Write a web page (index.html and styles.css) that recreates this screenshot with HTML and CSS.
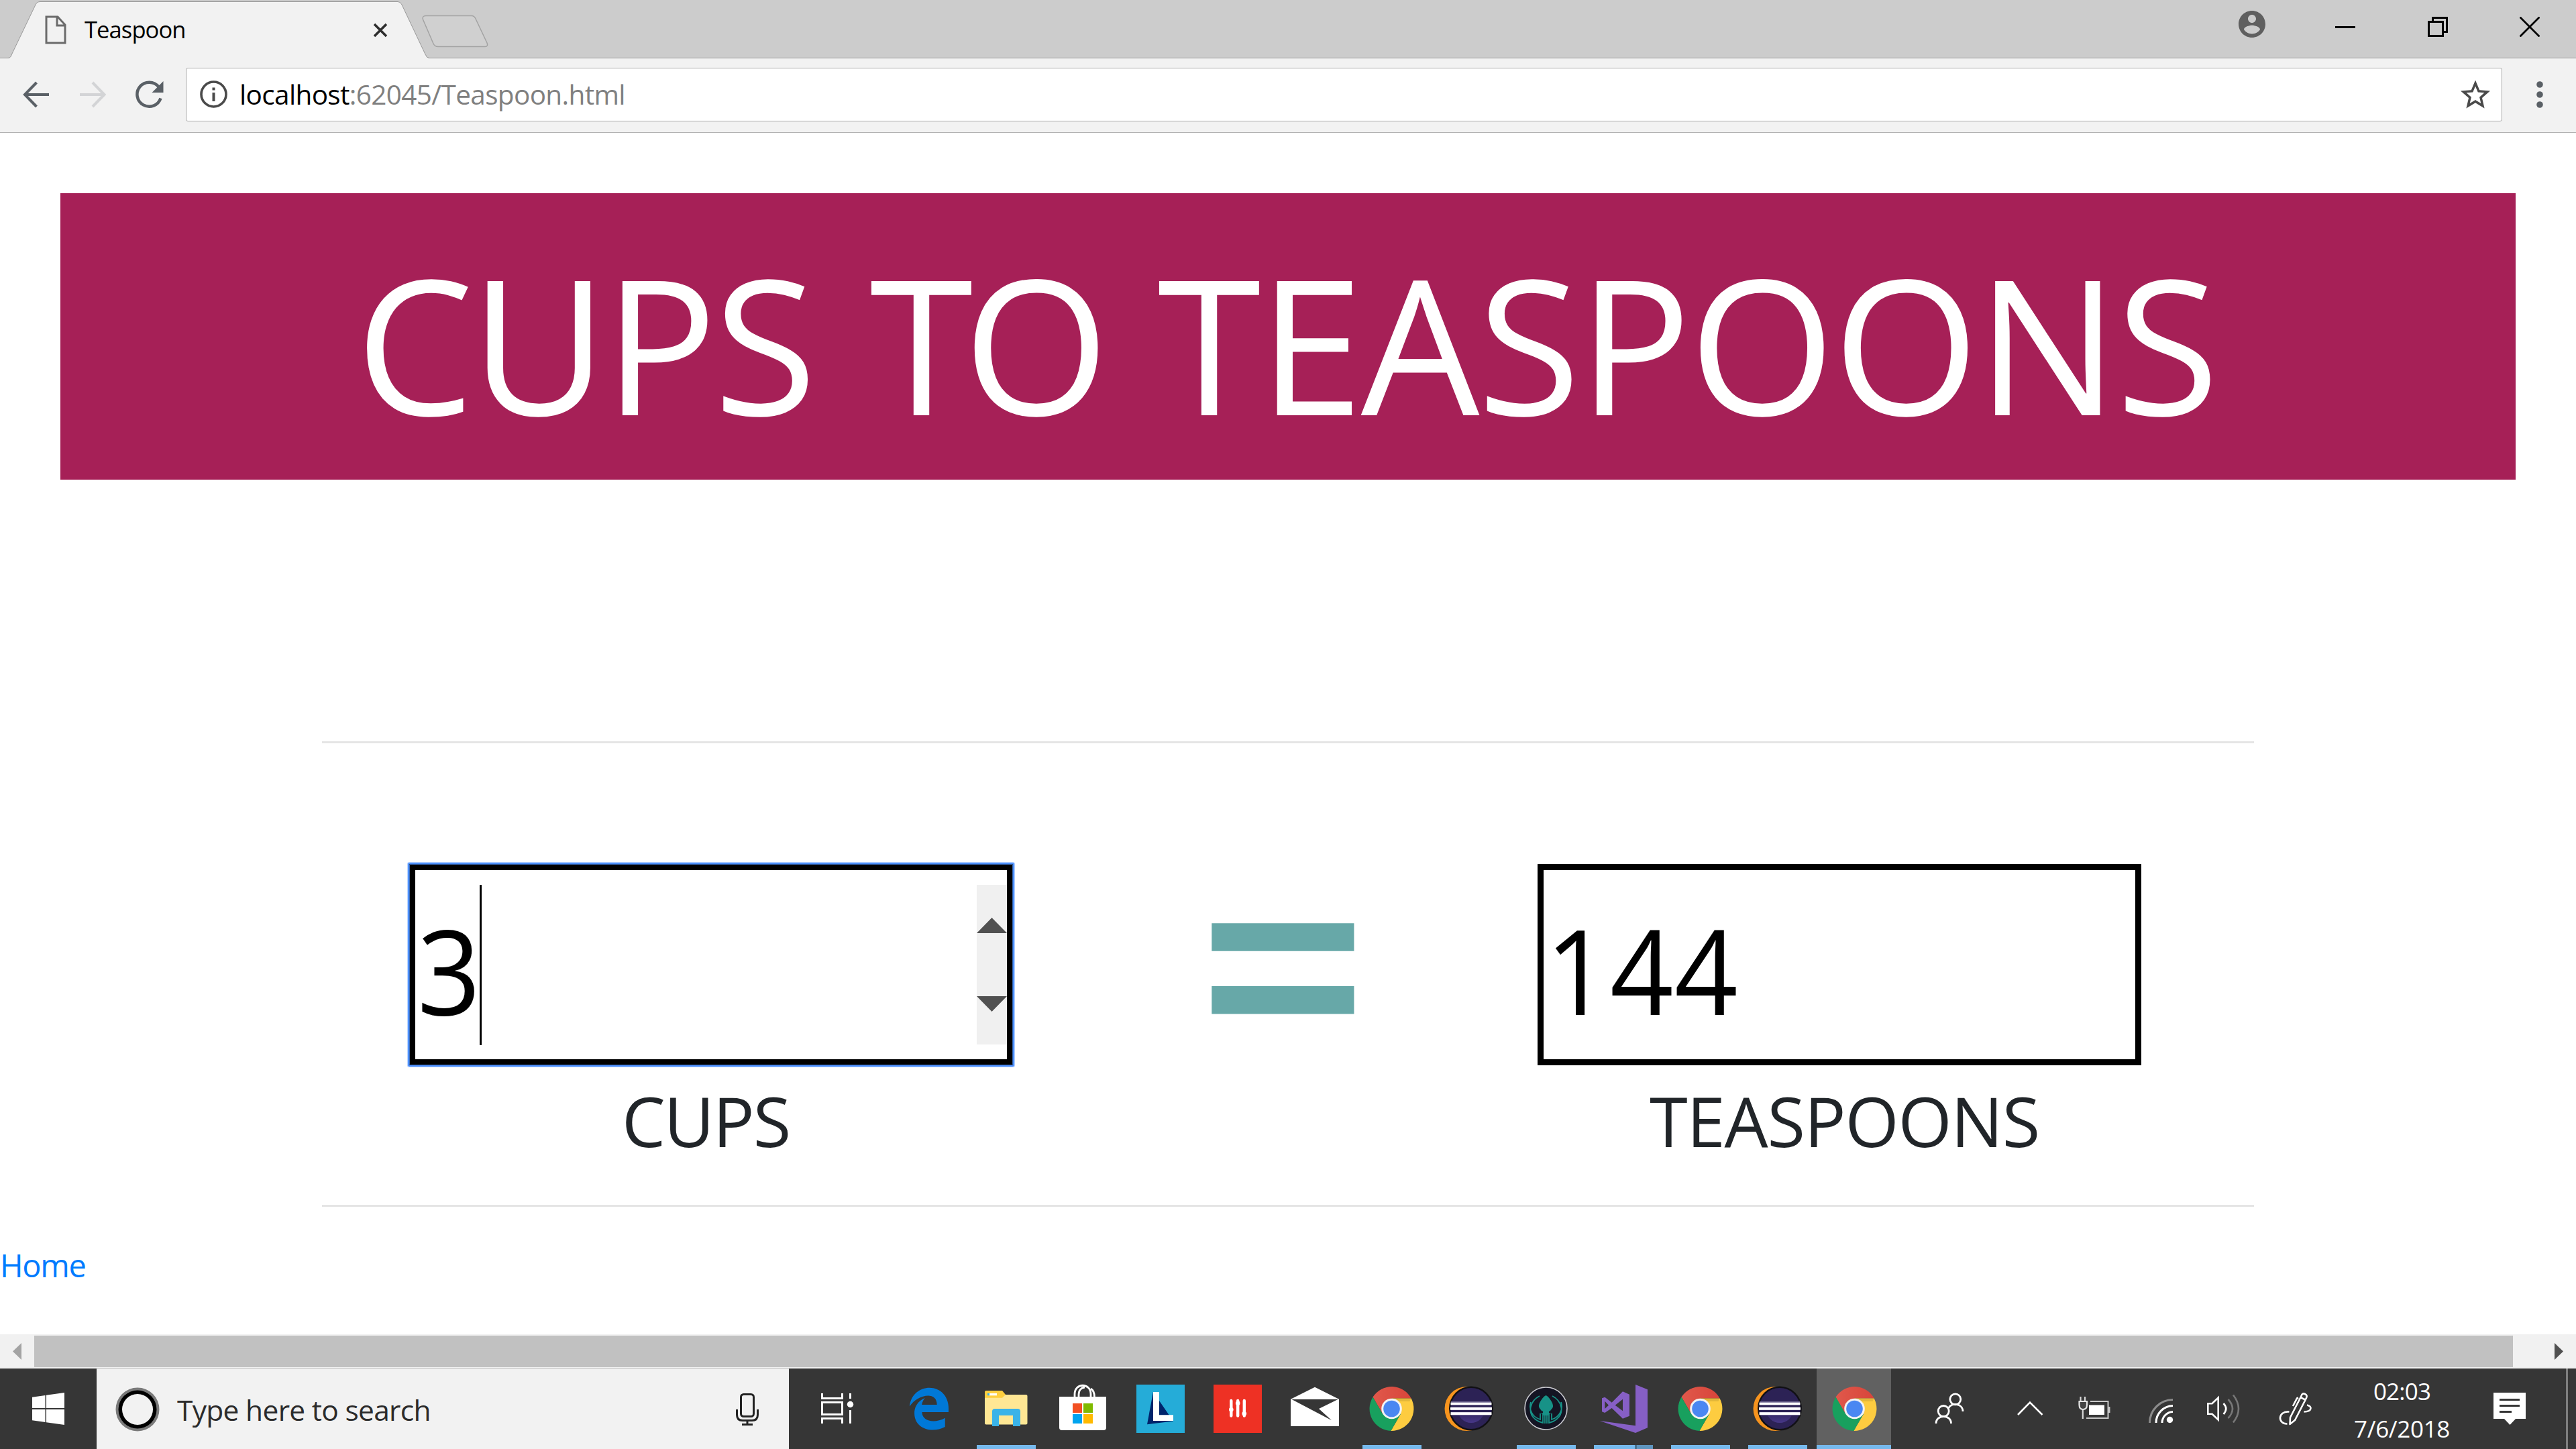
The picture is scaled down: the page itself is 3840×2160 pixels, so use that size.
FILE: index.html
```html
<!DOCTYPE html>
<html lang="en">
<head>
<meta charset="utf-8">
<title>Teaspoon</title>
<link rel="stylesheet" href="styles.css">
</head>
<body>
<svg class="defs" width="0" height="0">
  <defs>
    <linearGradient id="moon" x1="0" y1="0" x2="0" y2="1">
      <stop offset="0.5" stop-color="#2c2255"/><stop offset="1" stop-color="#473788"/>
    </linearGradient>
    <linearGradient id="red" x1="0" y1="0" x2="1" y2="0">
      <stop offset="0" stop-color="#e0584b"/><stop offset="1" stop-color="#d8453a"/>
    </linearGradient>
    <symbol id="chrome" viewBox="-57.5 -60 115 120">
      <path fill="url(#red)" d="M-27.97-17.45A33 33 0 0 1 29.1-15.5H0L-13.42 7.75Z"/>
      <path fill="#fdcc40" d="M29.1-15.5A33 33 0 0 1-1.13 32.95L13.42 7.75 0-15.5Z"/>
      <path fill="#18a05e" d="M-1.13 32.95A33 33 0 0 1-27.97-17.45L-13.42 7.75 13.42 7.75Z"/>
      <path fill="#000" opacity=".1" d="M0-15.5H29.1L27 -11H8Z"/>
      <circle r="15.3" fill="#f3f3f3"/><circle r="12.3" fill="#4a87f2"/>
    </symbol>
    <symbol id="eclipse" viewBox="0 0 115 120">
      <circle cx="54.5" cy="60" r="33" fill="#f7941e"/>
      <path fill="var(--cell)" d="M58 26H92V94H58A34 34 0 0 0 58 26Z"/>
      <circle cx="61" cy="59.5" r="33" fill="#111015"/>
      <circle cx="61" cy="59.5" r="30.5" fill="#2c2255"/>
      <circle cx="61" cy="61" r="20" fill="url(#moon)"/>
      <path fill="#6d6490" d="M31 49h60v21H31z"/>
      <path fill="#2c2255" d="M30.500 54.500h61v3h-61zM30.500 62h61v3h-61z"/>
      <path fill="#fff" d="M30.500 50.700h61v3.500h-61zM30 58h62v3.700H30zM30.500 65.300h61v3.700h-61z"/>
    </symbol>
  </defs>
</svg>

<header class="tabstrip">
  <div class="tab">
    <svg class="tab-shape" width="660" height="87" viewBox="0 0 660 87"><path d="M0 86.500H12Q16 86.500 17.500 81L53 7Q55 2.500 60 2.500H593Q597 2.500 599 7L634 81Q636 86.500 640 86.500H660V88H0Z" fill="#f2f2f2" stroke="#999"/></svg>
    <svg class="favicon" width="32" height="44" viewBox="0 0 32 44"><path d="M2 2H19L30 14V41H2ZM18 2V15H30" fill="none" stroke="#6b6b6b" stroke-width="3"/></svg>
    <span class="tab-title">Teaspoon</span>
    <svg class="tab-close" width="22" height="22" viewBox="0 0 22 22"><path d="M2 2 20 20M20 2 2 20" stroke="#2d2d2d" stroke-width="3.600"/></svg>
  </div>
  <svg class="newtab" width="100" height="50" viewBox="0 0 100 50"><path d="M6 1.500H74Q78 1.500 80 6L97 42Q99 47.500 94 47.500H24Q19 47.500 17 43L1.500 7Q0 1.500 6 1.500Z" fill="#d0d0d0" stroke="#a3a3a3" stroke-width="1.500"/></svg>
  <div class="window-buttons">
    <svg class="profile" width="40" height="40" viewBox="2 2 20 20"><path fill="#5f5f5f" d="M12 2C6.480 2 2 6.480 2 12s4.480 10 10 10 10-4.480 10-10S17.520 2 12 2zm0 3c1.660 0 3 1.340 3 3s-1.340 3-3 3-3-1.340-3-3 1.340-3 3-3zm0 14.200c-2.500 0-4.710-1.280-6-3.220.03-1.990 4-3.080 6-3.080 1.990 0 5.970 1.090 6 3.080-1.290 1.940-3.500 3.220-6 3.220z"/></svg>
    <svg width="30" height="30" viewBox="0 0 30 30"><path fill="#000" d="M0 14h30v3H0z"/></svg>
    <svg width="30" height="30" viewBox="0 0 30 30"><path fill="none" stroke="#000" stroke-width="3" d="M1.500 7.500H22.500V28.500H1.500ZM7.500 7V1.500H28.500V22.500H23"/></svg>
    <svg width="30" height="30" viewBox="0 0 30 30"><path stroke="#000" stroke-width="2.800" d="M.5.5 29.500 29.500M29.500.5.5 29.500"/></svg>
  </div>
</header>

<nav class="toolbar">
  <svg width="40" height="40" viewBox="0 0 40 40"><path fill="none" stroke="#5a6066" stroke-width="4" d="M40 20H4M21.500 2 4 20 21.500 38"/></svg>
  <svg class="forward" width="40" height="40" viewBox="0 0 40 40"><path fill="none" stroke="#d3d4d6" stroke-width="4" d="M0 20H36M19 2 36.500 20 19 38"/></svg>
  <svg class="reload" width="42" height="42" viewBox="0 0 42 42"><path fill="none" stroke="#5a6066" stroke-width="4.500" d="M34.500 9.500A18 18 0 1 0 37.500 26.500"/><path fill="#5a6066" d="M41.500 1V18H24.500Z"/></svg>
  <div class="omnibox">
    <svg width="41" height="41" viewBox="0 0 41 41"><circle cx="20.500" cy="20.500" r="18.500" fill="none" stroke="#4a4a4a" stroke-width="3.600"/><path fill="#4a4a4a" d="M18.500 10.500h4v4h-4zM18.500 18h4v13h-4z"/></svg>
    <span class="url"><b>localhost</b>:62045/Teaspoon.html</span>
    <svg class="star" width="44" height="43" viewBox="2 2 20 19"><path fill="#4a4a4a" d="M22 9.240l-7.190-.62L12 2 9.190 8.630 2 9.240l5.460 4.730L5.820 21 12 17.270 18.180 21l-1.630-7.030L22 9.240zM12 15.400l-3.760 2.270 1-4.280-3.320-2.880 4.380-.38L12 6.100l1.710 4.040 4.380.38-3.320 2.880 1 4.280L12 15.400z"/></svg>
  </div>
  <svg class="menu" width="10" height="42" viewBox="0 0 10 42"><g fill="#5a6066"><circle cx="5" cy="6" r="4.800"/><circle cx="5" cy="21" r="4.800"/><circle cx="5" cy="36" r="4.800"/></g></svg>
</nav>

<main class="page">
  <h1 class="banner"><span class="from">CUPS</span> <span class="to">TO</span> <span class="into">TEASPOONS</span></h1>
  <section class="converter">
    <div class="field">
      <div class="box focused"><span class="value">3</span><i class="caret"></i>
        <svg class="spinner" width="45" height="238" viewBox="0 0 45 238"><path fill="#f0f0f0" d="M0 0h45v238H0z"/><path fill="#505050" d="M22.500 49 45 72H0ZM0 166H45L22.500 189Z"/></svg>
      </div>
      <label class="cups">CUPS</label>
    </div>
    <div class="equals">=</div>
    <div class="field">
      <div class="box"><span class="value">144</span></div>
      <label class="teaspoons">TEASPOONS</label>
    </div>
  </section>
  <a class="home" href="#">Home</a>
</main>

<div class="scrollbar">
  <svg width="51" height="51" viewBox="0 0 51 51"><path fill="#a3a3a3" d="M32 13V38L19 25.500Z"/></svg>
  <div class="thumb"></div>
  <svg width="94" height="51" viewBox="0 0 94 51"><path fill="#505050" d="M62 13V38L75 25.500Z"/></svg>
</div>

<footer class="taskbar">
  <div class="start"><svg width="48" height="48" viewBox="0 0 48 48"><path fill="#fff" d="M0 6.800 19.500 4V23H0ZM21 3.800 48 0V23H21ZM0 25H19.500V44L0 41.200ZM21 25H48V48L21 44.200Z"/></svg></div>
  <div class="search">
    <svg width="66" height="66" viewBox="0 0 66 66"><circle cx="33" cy="33" r="32.500" fill="#7a7a7a"/><circle cx="33" cy="33" r="28.500" fill="#000"/><circle cx="33" cy="33" r="23" fill="#f2f2f2"/></svg>
    <span class="placeholder">Type here to search</span>
    <svg class="mic" width="34" height="48" viewBox="0 0 34 48"><g fill="none" stroke="#222" stroke-width="3"><rect x="7.500" y="1.500" width="19" height="33" rx="4"/><path d="M1.500 24V32Q1.500 40.500 10 40.500H24Q32.500 40.500 32.500 32V24M17 41V46M9 46.500H25"/></g></svg>
  </div>
  <svg class="taskview" width="151" height="120" viewBox="1176 2040 151 120"><path fill="none" stroke="#fff" stroke-width="3" d="M1225.500 2077V2084.500H1255.500V2077M1225.500 2090.500H1255.500V2108.500H1225.500ZM1225.500 2122V2114.500H1255.500V2122M1267.500 2077V2085M1267.500 2102V2122"/><circle cx="1267.500" cy="2093.500" r="4.700" fill="#fff"/></svg>

  <div class="app"><svg viewBox="1327 2040 115 120"><path fill="#0078d7" transform="translate(1347.400 2062.500) scale(3.140)" d="M2.740 10.810C3.830-1.360 22.500-1.360 21.200 13.560H8.610C8.610 17.850 14.420 19.190 19.540 16.310V20.530C13.250 23.880 5 21.430 5 14.090C5 8.580 9.970 6.810 9.970 6.810C9.970 6.810 8.580 8.580 8.540 10.050H15.700C15.700 2.930 5.900 5.570 2.740 10.810Z"/></svg></div>
  <div class="app running"><svg viewBox="1442 2040 115 120"><rect x="1468" y="2079" width="63.500" height="44.500" rx="2" fill="#ffe794"/><path fill="#ffcf3f" d="M1468 2083.700V2075Q1468 2073 1470 2073H1494L1499 2079 1494 2083.700Z"/><path fill="#fff" d="M1475 2077h11v3.300h-11z"/><path fill="#3ab3e8" d="M1472 2077h3v3.300h-3zM1479 2126V2104Q1479 2100 1483 2100H1517Q1521 2100 1521 2104V2126H1510V2110H1489V2126Z"/></svg></div>
  <div class="app"><svg viewBox="1557 2040 115 120"><g fill="none" stroke="#fff" stroke-width="2.800"><path d="M1602 2083V2078C1602 2061 1626 2061 1626 2078V2083"/><path d="M1608 2083V2079C1608 2072 1612 2068.500 1617 2068M1626 2070Q1631.500 2073 1631.500 2083"/></g><path fill="#fff" d="M1579 2082H1649V2128Q1649 2132 1645 2132H1583Q1579 2132 1579 2128Z"/><path fill="#f25022" d="M1599 2092h14v14h-14z"/><path fill="#7fba00" d="M1615 2092h14v14h-14z"/><path fill="#00a4ef" d="M1599 2108h14v14h-14z"/><path fill="#ffb900" d="M1615 2108h14v14h-14z"/></svg></div>
  <div class="app"><svg viewBox="1672 2040 115 120"><path fill="#25acd8" d="M1694 2064h72v72h-72z"/><path fill="#00246b" d="M1719 2075 1710 2123.300 1749 2118.500Z"/><path fill="#fff" d="M1719 2075H1728V2109.300H1749V2118H1719Z"/></svg></div>
  <div class="app"><svg viewBox="1787 2040 115 120"><path fill="#ee3124" d="M1809 2064h72v72h-72z"/><path stroke="#fff" stroke-width="4.400" stroke-linecap="round" d="M1835.300 2088V2110.500M1845.200 2088V2110.500M1854.800 2088V2110.500"/><g fill="#fff"><circle cx="1835.300" cy="2101.300" r="3.300"/><circle cx="1845.200" cy="2091.700" r="3.300"/><circle cx="1854.800" cy="2107.300" r="3.300"/></g></svg></div>
  <div class="app"><svg viewBox="1902 2040 115 120"><path fill="#fff" d="M1924 2085.700 1960 2067.700 1996 2085.700V2126H1924Z"/><path fill="#363636" d="M1925.500 2086H1994.500L1966 2100 1985 2117.300Z"/></svg></div>
  <div class="app running"><svg><use href="#chrome"/></svg></div>
  <div class="app"><svg><use href="#eclipse"/></svg></div>
  <div class="app running"><svg viewBox="2247 2040 115 120"><circle cx="2304.500" cy="2099.500" r="31.500" fill="#141423" stroke="#c9c9cf" stroke-width="1.600"/><path fill="#179287" d="M2304.500 2080C2309 2082 2316 2092 2315 2097 2314 2101 2311 2101 2311 2104Q2313 2108 2309 2108L2308 2110H2301L2300 2108Q2296 2108 2298 2104C2298 2101 2295 2101 2294 2097 2293 2092 2300 2082 2304.500 2080Z"/><g fill="none" stroke="#179287" stroke-width="1.800"><path d="M2295 2081C2281 2088 2276 2106 2289 2116Q2294 2120 2300 2121V2108M2282 2090C2278 2103 2286 2113 2296 2116V2107M2314 2081C2328 2088 2333 2106 2320 2116Q2315 2120 2309 2121V2108M2327 2090C2331 2103 2323 2113 2313 2116V2107M2303 2108V2122M2306 2108V2122"/></g><circle cx="2298.500" cy="2105" r="1.700" fill="#141423"/><circle cx="2310.500" cy="2105" r="1.700" fill="#141423"/></svg></div>
  <div class="app grouped"><svg viewBox="2362 2040 115 120"><path fill="#865fc5" fill-rule="evenodd" transform="translate(2320 2020) scale(.33333)" d="M354 132 408 154V325L354 348 194 294 354 316ZM204 193 217 188 248 212 297 163 327 176V272L297 284 248 237 217 258 204 253ZM217 206V240L234 224ZM297 197V250L263 224Z"/></svg></div>
  <div class="app running"><svg><use href="#chrome"/></svg></div>
  <div class="app running"><svg><use href="#eclipse"/></svg></div>
  <div class="app active"><svg><use href="#chrome"/></svg></div>

  <div class="tray">
    <svg width="148" height="120" viewBox="2822 2040 148 120"><g fill="none" stroke="#fff" stroke-width="2.800"><circle cx="2914.800" cy="2085.800" r="8"/><circle cx="2897.200" cy="2103.500" r="8"/><path d="M2886 2122C2886 2108 2908.500 2108 2908.500 2122M2904.500 2099C2909 2090 2926 2092 2926 2104"/></g></svg>
    <svg width="100" height="120" viewBox="2970 2040 100 120"><path fill="none" stroke="#fff" stroke-width="2.600" d="M3008 2109 3026 2090.500 3044.500 2109"/></svg>
    <svg width="105" height="120" viewBox="3070 2040 105 120"><path fill="none" stroke="#c8c8c8" stroke-width="2" d="M3116 2089H3142.500V2114H3110M3144.500 2097V2106"/><path fill="#fff" d="M3114 2094.500h23v14.500h-23z"/><path fill="none" stroke="#d8d8d8" stroke-width="2.200" d="M3101.500 2082V2088M3108 2082V2088M3104.800 2101V2115"/><path fill="#444" stroke="#e6e6e6" stroke-width="2.200" d="M3099.500 2089H3111V2094Q3111 2101 3105 2101 3099.500 2101 3099.500 2094Z"/></svg>
    <svg width="90" height="120" viewBox="3175 2040 90 120"><g fill="none" stroke="#fff" stroke-width="3"><path d="M3223 2121A16.500 16.500 0 0 1 3239 2104.500M3214 2121A25.500 25.500 0 0 1 3239 2095.500"/><path stroke="#8c8c8c" d="M3204.500 2121A34.500 34.500 0 0 1 3239 2086.500"/></g><circle cx="3234.500" cy="2116.500" r="4.700" fill="#fff"/></svg>
    <svg width="103" height="120" viewBox="3265 2040 103 120"><g fill="none" stroke="#fff" stroke-width="2.600"><path d="M3291.300 2092.300H3297.500L3306.700 2083.500V2116.500L3297.500 2107.700H3291.300ZM3314.500 2092Q3322 2100 3314.500 2108"/><path stroke="#777" d="M3321.500 2086Q3334.500 2100 3321.500 2114M3329 2079.500Q3345 2100 3329 2120.500"/></g></svg>
    <svg width="110" height="120" viewBox="3368 2040 110 120"><g fill="none" stroke="#fff" stroke-width="2.600" stroke-linejoin="round"><path d="M3413.500 2123 3414 2113 3430.500 2081Q3432 2076 3436 2078 3440 2080 3438 2084L3421 2117ZM3429 2083 3437.500 2087M3426 2083.500 3424 2084.500 3418 2096M3412.500 2104.500C3395 2103 3395 2123 3409.500 2122.500M3439 2094.500C3447 2096 3447 2104.500 3434.500 2104.500"/></g></svg>
    <div class="clock"><span class="time">02:03</span><span class="date">7/6/2018</span></div>
    <svg width="142" height="120" viewBox="3683 2040 142 120"><path fill="#fff" d="M3717 2076H3765V2115H3750L3741.500 2124 3733 2115H3717Z"/><path fill="#363636" d="M3726 2085h30v3h-30zM3726 2094h30v3h-30zM3726 2103h18v3h-18z"/></svg>
    <div class="show-desktop"></div>
  </div>
</footer>
</body>
</html>
```
FILE: styles.css
```css
* { box-sizing: border-box; }
html, body { margin: 0; }
body {
  width: 3840px;
  height: 2160px;
  overflow: hidden;
  display: flex;
  flex-direction: column;
  background: #fff;
  font-family: "Open Sans", "Noto Sans", sans-serif;
  color: #000;
}
svg { display: block; flex: none; }
.defs { position: absolute; }

/* Tab strip */
.tabstrip {
  flex: none;
  height: 87px;
  display: flex;
  align-items: flex-start;
  background: #ccc;
  border-bottom: 1px solid #999;
}
.tab {
  position: relative;
  width: 629px;
  height: 87px;
  display: flex;
  align-items: flex-start;
  padding-left: 67px;
}
.tab-shape { position: absolute; left: 0; top: 0; }
.favicon { position: relative; margin-top: 23px; }
.tab-title {
  position: relative;
  width: 430px;
  margin: 14px 0 0 27px;
  font-size: 34.5px;
  line-height: 60px;
  letter-spacing: -0.9px;
}
.tab-close { position: relative; margin-top: 34px; }
.newtab { position: relative; margin-top: 22px; }
.window-buttons {
  margin-left: auto;
  padding: 25px 54px 0 0;
  display: flex;
  gap: 107.5px;
}
.profile { margin: -9px -3px 0 0; }

/* Toolbar */
.toolbar {
  flex: none;
  height: 111px;
  display: flex;
  align-items: center;
  padding: 0 49px 3px 33px;
  background: #f2f2f2;
  border-bottom: 1px solid #b2b2b2;
}
.forward { margin-left: 46px; }
.reload { margin-left: 43px; }
.omnibox {
  width: 3453px;
  height: 80px;
  margin-left: 33px;
  padding: 0 17px 0 20px;
  display: flex;
  align-items: center;
  background: #fff;
  border: 1px solid #a9a9a9;
  border-radius: 3px;
}
.url {
  margin-left: 18px;
  font-size: 40.5px;
  line-height: 78px;
  letter-spacing: -0.65px;
  color: #808080;
}
.url b { font-weight: 400; color: #000; }
.star { margin-left: auto; }
.menu { margin-left: auto; }

/* Page */
.page {
  flex: none;
  height: 1791px;
  padding-top: 90px;
  display: flex;
  flex-direction: column;
}
.banner {
  flex: none;
  display: flex;
  height: 427px;
  margin: 0 90px;
  padding: 9px 0 0 440px;
  background: #a62057;
  color: #fff;
  font-size: 280px;
  font-weight: 400;
  line-height: 427px;
  white-space: nowrap;
}
.from { letter-spacing: -5px; }
.to { margin-left: 84px; letter-spacing: -15px; }
.into { margin-left: 87px; letter-spacing: -3.3px; }
.converter {
  flex: none;
  width: 2880px;
  height: 694px;
  margin: 390px 480px 0;
  padding: 180px 0 0 130px;
  display: flex;
  border-top: 3px solid #e5e5e5;
  border-bottom: 3px solid #e5e5e5;
}
.field { width: 900px; display: flex; flex-direction: column; }
.box {
  height: 300px;
  padding: 22px 0 22px 3px;
  display: flex;
  border: 9px solid #000;
}
.focused {
  box-shadow: 0 0 0 2px #4d90fe, 0 0 0 3px #b8d3ff;
  outline: 1px solid #3765b0;
  outline-offset: -1px;
  border-radius: 1px;
}
.value {
  font-size: 176px;
  line-height: 252px;
  letter-spacing: 1.5px;
  transform: scaleX(0.94);
  transform-origin: 0 0;
}
.caret { width: 3px; height: 239px; margin-left: -9px; background: #000; }
.spinner { margin-left: auto; }
.field label {
  font-size: 103px;
  line-height: 140px;
  margin-top: 12px;
  color: #212529;
}
.field .cups { letter-spacing: -2.1px; padding-left: 317px; }
.field .teaspoons { letter-spacing: -1.2px; padding-left: 167px; }
.equals {
  width: 782px;
  height: 300px;
  padding-left: 274px;
  font-size: 450px;
  font-weight: 600;
  line-height: 279px;
  color: #67a8a8;
  transform: scaleY(1.07);
}
.home {
  margin-top: 47px;
  font-size: 47px;
  line-height: 80px;
  letter-spacing: -1.3px;
  color: #007bff;
  text-decoration: none;
}

/* Horizontal scrollbar */
.scrollbar { flex: none; height: 51px; display: flex; background: #f1f1f1; }
.thumb { flex: 1; margin: 2px 0; background: #c1c1c1; }

/* Taskbar */
.taskbar {
  --cell: #363636;
  flex: none;
  height: 120px;
  display: flex;
  background: #363636;
}
.start { width: 144px; padding: 36px 48px; }
.search {
  width: 1032px;
  padding: 0 45px 0 28px;
  display: flex;
  align-items: center;
  background: #f2f2f2;
  border-top: 1px solid #bbb;
}
.placeholder {
  margin: 2px 0 0 26px;
  font-size: 42.5px;
  line-height: 80px;
  letter-spacing: -0.7px;
  color: #2b2b2b;
}
.mic { margin-left: auto; }
.app { width: 115px; height: 120px; display: grid; }
.app > svg { grid-area: 1 / 1; width: 115px; height: 120px; }
.app::after {
  grid-area: 1 / 1;
  content: "";
  align-self: end;
  justify-self: center;
  width: 88px;
  height: 0;
  background: #76b9ed;
}
.running::after { height: 6px; }
.grouped::after {
  height: 6px;
  background: linear-gradient(90deg, #76b9ed 61px, #47708f 61px 64px, #5f95bf 64px);
}
.active { background: linear-gradient(90deg, transparent 1px, #616161 1px 112px, transparent 112px); }
.active::after { width: 111px; height: 6px; justify-self: start; margin-left: 1px; }
.tray { flex: 1; display: flex; color: #fff; }
.clock {
  width: 205px;
  padding-top: 6px;
  display: flex;
  flex-direction: column;
  align-items: center;
  font-size: 35px;
  line-height: 56px;
}
.time { letter-spacing: -0.8px; }
.date { letter-spacing: -0.35px; }
.show-desktop { width: 15px; border-left: 3px solid #808080; }
```
